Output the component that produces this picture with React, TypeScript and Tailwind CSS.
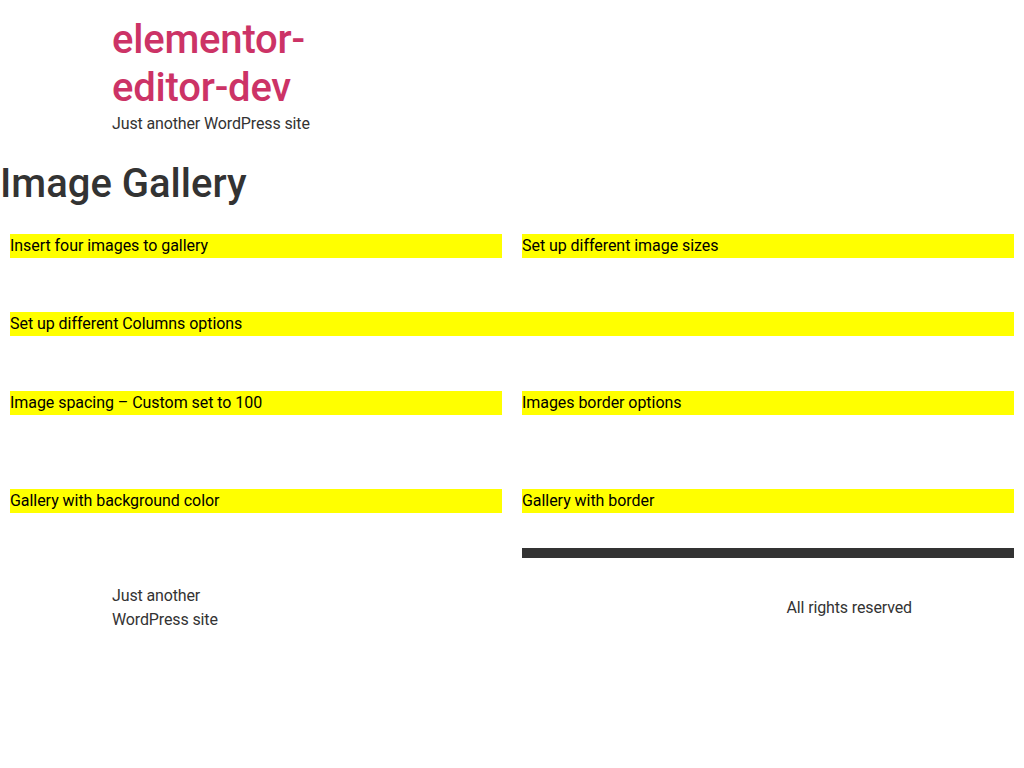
export default function App() {
  const font = { fontFamily: 'Roboto, "Liberation Sans", sans-serif' };
  return (
    <div className="min-h-[768px] bg-white text-[#333333] tracking-[-0.13px]" style={font}>
      <header className="pl-[112px] pt-[16px]">
        <div className="w-[230px] text-[40px] leading-[48px] font-medium tracking-[-0.2px] text-[#cc3366]">elementor-editor-dev</div>
        <p className="text-[16px] leading-[24px] text-[#333333]">Just another WordPress site</p>
      </header>
      <h1 className="mt-6 text-[40px] leading-[48px] font-medium tracking-normal text-[#333333]">Image Gallery</h1>
      <main className="mt-[26px] px-[10px] text-[16px] leading-[24px] tracking-[-0.05px] text-black">
        <div className="flex gap-[20px]">
          <div className="flex-1 h-6 bg-[#ffff00]">Insert four images to gallery</div>
          <div className="flex-1 h-6 bg-[#ffff00]">Set up different image sizes</div>
        </div>
        <div className="mt-[54px] h-6 bg-[#ffff00]">Set up different Columns options</div>
        <div className="mt-[55px] flex gap-[20px]">
          <div className="flex-1 h-6 bg-[#ffff00]">Image spacing – Custom set to 100</div>
          <div className="flex-1 h-6 bg-[#ffff00]">Images border options</div>
        </div>
        <div className="mt-[74px] flex gap-[20px]">
          <div className="flex-1">
            <div className="h-6 bg-[#ffff00]">Gallery with background color</div>
          </div>
          <div className="flex-1">
            <div className="h-6 bg-[#ffff00]">Gallery with border</div>
            <div className="mt-[35px] h-[10px] bg-[#333333]" />
          </div>
        </div>
      </main>
      <footer className="mt-[26px] flex items-center justify-between pl-[112px] pr-[112px] text-[16px] leading-[24px] text-[#333333]">
        <p className="w-[120px]">Just another WordPress site</p>
        <p>All rights reserved</p>
      </footer>
    </div>
  );
}
